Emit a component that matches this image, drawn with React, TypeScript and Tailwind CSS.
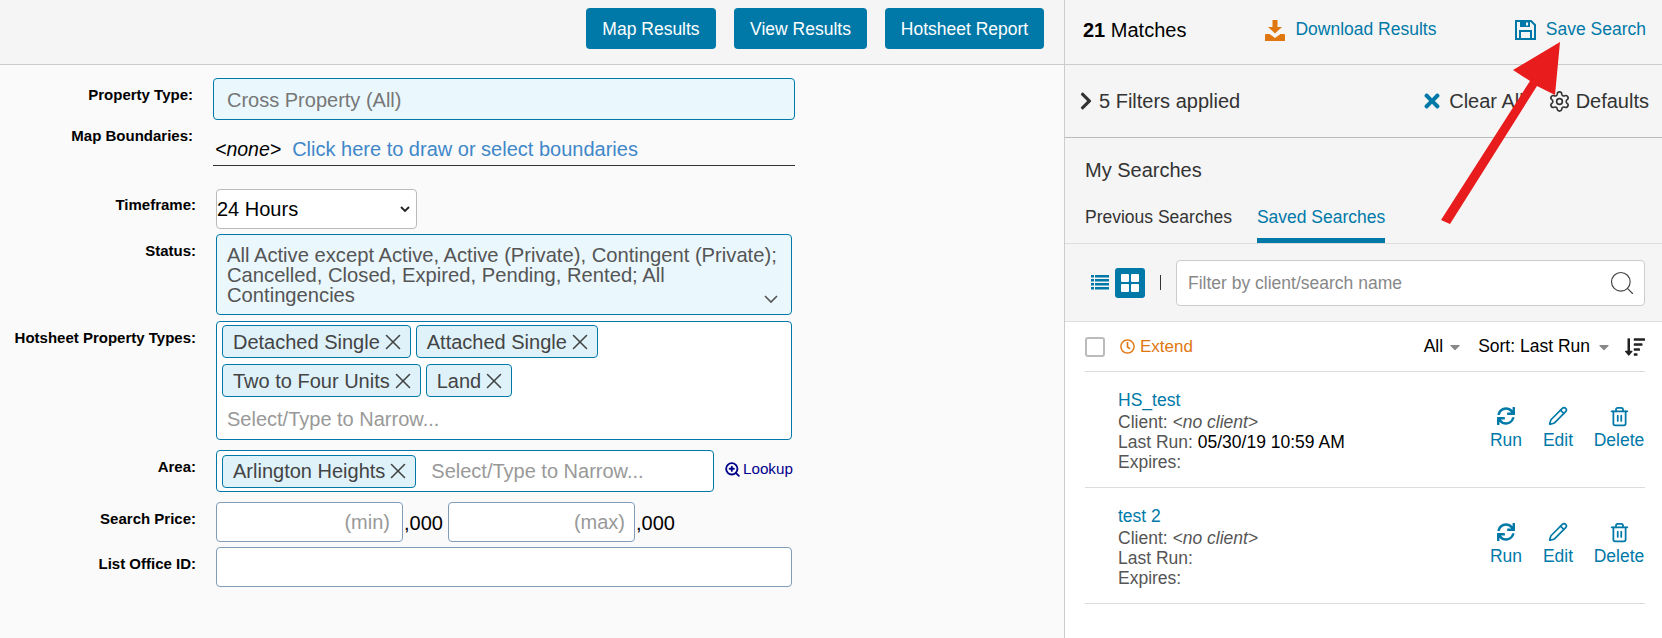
import { Pencil, Search, Settings, Trash2, ZoomIn, X } from "lucide-react";
import {
  FaCaretDown,
  FaChevronRight,
  FaRegClock,
  FaSortAmountDown,
  FaSync,
  FaTimes,
} from "react-icons/fa";

const labelClass =
  "w-[196px] shrink-0 text-right text-[15px] leading-[18px] font-bold text-black";
const boxClass = "border border-[#0079a8] rounded-[4px]";
const plainInput =
  "h-[40px] border border-[#7f9db9] rounded-[4px] bg-white text-[20px] outline-none placeholder:text-[#999]";

function Chip({ text }: { text: string }) {
  return (
    <span className="inline-flex h-[33px] items-center rounded-[4px] border border-[#0079a8] bg-[#dff2fa] pl-[10px] text-[20px] text-[#444]">
      {text}
      <X size={26} strokeWidth={1.5} className="mr-[4px]" />
    </span>
  );
}

function Action({ icon, label, w }: { icon: React.ReactNode; label: string; w: string }) {
  return (
    <div className={`flex flex-col items-center ${w}`}>
      <div className="flex h-[23px] items-center">{icon}</div>
      <span className="text-[17.5px] leading-[24px]">{label}</span>
    </div>
  );
}

function SearchRow({ name, lastRun }: { name: string; lastRun?: string }) {
  return (
    <div className="flex h-[116px] items-center border-b border-[#ddd] pl-[33px]">
      <div className="mt-[2px] flex-1 text-[17.5px] leading-[20px] text-[#555]">
        <div className="mb-[2px] text-[#0079a8]">{name}</div>
        <div>
          Client: <i>&lt;no client&gt;</i>
        </div>
        <div>
          Last Run: <span className="text-black">{lastRun}</span>
        </div>
        <div>Expires:</div>
      </div>
      <div className="mr-[1px] flex gap-[21px] pb-[3px] text-[#0079a8]">
        <Action w="w-[32px]" label="Run" icon={<FaSync size={18} />} />
        <Action w="w-[30px]" label="Edit" icon={<Pencil size={20} strokeWidth={2} />} />
        <Action w="w-[50px]" label="Delete" icon={<Trash2 size={21} strokeWidth={2} />} />
      </div>
    </div>
  );
}

function DownloadIcon() {
  return (
    <svg width="20" height="21" viewBox="0 0 20 21" fill="#e0760f">
      <path d="M7.500 0h5v7h4.500L10 13.500 3 7h4.500z" />
      <path d="M1 14h3.500l5.500 4 5.500-4H19a1 1 0 0 1 1 1v6H0v-6a1 1 0 0 1 1-1z" />
    </svg>
  );
}

function SaveIcon() {
  return (
    <svg width="21" height="20" viewBox="0 0 21 20" fill="none" stroke="#0079a8" strokeWidth="2">
      <path d="M1 1h15l4 4v14H1z" />
      <path d="M5 11h11v8H5z" />
      <path d="M5 1h10v6H5z" fill="#0079a8" stroke="none" />
      <path d="M11 2.500h2v3h-2z" fill="#f5f5f5" stroke="none" />
    </svg>
  );
}

function ListIcon() {
  return (
    <svg width="18" height="15" viewBox="0 0 18 15" fill="#0079a8">
      <path d="M0 0h3v2.500H0zM4 0h14v2.500H4zM0 4h3v2.500H0zM4 4h14v2.500H4zM0 8h3v2.500H0zM4 8h14v2.500H4zM0 12h3v2.500H0zM4 12h14v2.500H4z" />
    </svg>
  );
}

function GridIcon() {
  return (
    <svg width="18" height="18" viewBox="0 0 18 18" fill="#fff">
      <rect width="8" height="8" rx="1" />
      <rect x="10" width="8" height="8" rx="1" />
      <rect y="10" width="8" height="8" rx="1" />
      <rect x="10" y="10" width="8" height="8" rx="1" />
    </svg>
  );
}

export default function App() {
  return (
    <div className="relative flex h-[638px] w-[1662px] overflow-hidden bg-white font-['Liberation_Sans',Arial,sans-serif] text-black">
      {/* left search form */}
      <div className="flex w-[1065px] flex-col border-r border-[#ccc] bg-[#fafafa]">
        <div className="flex h-[65px] items-start justify-end gap-[18px] border-b border-[#ccc] bg-[#f5f5f5] pr-[20px] pt-[8px]">
          <button className="h-[41px] w-[130px] rounded-[4px] bg-[#0079a8] pt-[1px] text-[17.5px] text-white">
            Map Results
          </button>
          <button className="h-[41px] w-[133px] rounded-[4px] bg-[#0079a8] pt-[1px] text-[17.5px] text-white">
            View Results
          </button>
          <button className="h-[41px] w-[159px] rounded-[4px] bg-[#0079a8] pt-[1px] text-[17.5px] text-white">
            Hotsheet Report
          </button>
        </div>

        <div className="pt-[13px]">
          <div className="flex gap-[20px]">
            <div className={`${labelClass} mt-[8px] !w-[193px]`}>Property Type:</div>
            <div className={`${boxClass} flex h-[42px] w-[582px] items-center bg-[#eaf7fd] px-[13px] pt-[2px] text-[20px] text-[#777]`}>
              Cross Property (All)
            </div>
          </div>

          <div className="mt-[7px] flex gap-[20px]">
            <div className={`${labelClass} !w-[193px]`}>Map Boundaries:</div>
            <div className="flex h-[39px] w-[582px] items-end border-b border-[#333] pb-[4px] text-[20px] leading-[24px]">
              <i className="ml-[2px] text-[19.5px]">&lt;none&gt;</i>
              <span className="ml-[11px] text-[#3f87c9]">Click here to draw or select boundaries</span>
            </div>
          </div>

          <div className="mt-[23px] flex gap-[20px]">
            <div className={`${labelClass} mt-[7px]`}>Timeframe:</div>
            <div className="relative h-[40px] w-[201px]">
              <select className="h-full w-full appearance-none rounded-[4px] border border-[#bbb] bg-white text-[20px]">
                <option>24 Hours</option>
              </select>
              <svg className="pointer-events-none absolute right-[7px] top-[17px]" width="10" height="7" viewBox="0 0 10 7" fill="none" stroke="#222" strokeWidth="1.8">
                <path d="M1 1l4 4 4-4" />
              </svg>
            </div>
          </div>

          <div className="mt-[5px] flex gap-[20px]">
            <div className={`${labelClass} mt-[8px]`}>Status:</div>
            <div className={`${boxClass} relative h-[81px] w-[576px] bg-[#eaf7fd] px-[10px] pt-[10px] text-[20.2px] leading-[20px] text-[#555]`}>
              All Active except Active, Active (Private), Contingent (Private); Cancelled, Closed, Expired, Pending, Rented; All Contingencies
              <svg className="absolute bottom-[10px] right-[13px]" width="14" height="9" viewBox="0 0 14 9" fill="none" stroke="#555" strokeWidth="1.6">
                <path d="M1 1l6 6 6-6" />
              </svg>
            </div>
          </div>

          <div className="mt-[6px] flex gap-[20px]">
            <div className={`${labelClass} mt-[8px]`}>Hotsheet Property Types:</div>
            <div className={`${boxClass} h-[119px] w-[576px] bg-white px-[5px] pt-[3px]`}>
              <div className="flex gap-[5px]">
                <Chip text="Detached Single" />
                <Chip text="Attached Single" />
              </div>
              <div className="mt-[6px] flex gap-[5px]">
                <Chip text="Two to Four Units" />
                <Chip text="Land" />
              </div>
              <input
                className="mt-[10px] w-full px-[5px] text-[20px] leading-[24px] outline-none placeholder:text-[#999]"
                placeholder="Select/Type to Narrow..."
              />
            </div>
          </div>

          <div className="mt-[10px] flex gap-[20px]">
            <div className={`${labelClass} mt-[8px]`}>Area:</div>
            <div className={`${boxClass} flex h-[42px] w-[498px] items-center bg-white pl-[5px]`}>
              <Chip text="Arlington Heights" />
              <input
                className="ml-[15px] flex-1 text-[20px] outline-none placeholder:text-[#999]"
                placeholder="Select/Type to Narrow..."
              />
            </div>
            <div className="-ml-[10px] flex items-center pb-[3px] text-[15.2px] text-[#00008b]">
              <ZoomIn size={17} strokeWidth={2.6} className="mr-[2px]" />
              Lookup
            </div>
          </div>

          <div className="mt-[10px] flex gap-[20px]">
            <div className={`${labelClass} mt-[8px]`}>Search Price:</div>
            <div className="flex items-center text-[20px]">
              <input className={`${plainInput} w-[187px] pr-[12px] text-right`} placeholder="(min)" />
              <span className="ml-[1px] w-[44px] pt-[2px]">,000</span>
              <input className={`${plainInput} w-[187px] pr-[9px] text-right`} placeholder="(max)" />
              <span className="ml-[1px] pt-[2px]">,000</span>
            </div>
          </div>

          <div className="mt-[5px] flex gap-[20px]">
            <div className={`${labelClass} mt-[8px]`}>List Office ID:</div>
            <input className={`${plainInput} w-[576px]`} />
          </div>
        </div>
      </div>

      {/* right results panel */}
      <div className="flex flex-1 flex-col">
        <div className="flex h-[65px] items-center border-b border-[#ccc] bg-[#f5f5f5] pb-[4px] pl-[18px] pr-[16px]">
          <span className="mb-[1px] text-[20px]">
            <b>21</b> Matches
          </span>
          <span className="ml-[79px] flex items-center text-[17.5px] text-[#0079a8]">
            <DownloadIcon />
            <span className="mb-[1px] ml-[10px]">Download Results</span>
          </span>
          <span className="ml-auto flex items-center text-[17.5px] text-[#0079a8]">
            <SaveIcon />
            <span className="mb-[1px] ml-[10px]">Save Search</span>
          </span>
        </div>

        <div className="flex h-[73px] items-center border-b border-[#bbb] bg-[#f5f5f5] pl-[11px] pr-[7px] text-[20px] text-[#333]">
          <FaChevronRight size={20} />
          <span className="ml-[3px]">5 Filters applied</span>
          <FaTimes size={22} className="ml-[181px] text-[#0079a8]" />
          <span className="ml-[6px]">Clear All</span>
          <Settings size={23} strokeWidth={1.7} className="ml-auto mr-[-1px]" />
          <span className="ml-[6px] mr-[6px]">Defaults</span>
        </div>

        <div className="flex h-[106px] flex-col justify-end border-b border-[#ddd] bg-[#f5f5f5] pl-[20px]">
          <div className="text-[20px] text-[#333]">My Searches</div>
          <div className="mt-[18px] flex gap-[25px] text-[17.5px]">
            <span className="pt-[1px] text-[#333]">Previous Searches</span>
            <span className="border-b-[5px] border-[#0079a8] pb-[8px] pt-[1px] text-[#0079a8]">Saved Searches</span>
          </div>
        </div>

        <div className="flex h-[78px] items-center border-b border-[#ddd] bg-[#f5f5f5] pl-[26px] pr-[17px]">
          <ListIcon />
          <span className="ml-[6px] flex h-[30px] w-[30px] items-center justify-center rounded-[3px] bg-[#0079a8]">
            <GridIcon />
          </span>
          <span className="ml-[15px] h-[15px] w-px bg-[#333]" />
          <div className="relative ml-[15px] flex-1">
            <input
              className="h-[46px] w-full rounded-[4px] border border-[#ccc] bg-white px-[11px] pt-[1px] text-[17.5px] outline-none placeholder:text-[#888]"
              placeholder="Filter by client/search name"
            />
            <Search size={28} strokeWidth={1} className="absolute right-[9px] top-[9px] text-[#444]" />
          </div>
        </div>

        <div className="pl-[20px] pr-[17px]">
          <div className="flex h-[50px] items-center border-b border-[#ddd]">
            <span className="h-[20px] w-[20px] rounded-[3px] border-2 border-[#bbb] bg-white" />
            <FaRegClock size={15} className="ml-[15px] text-[#e0760f]" />
            <span className="ml-[5px] text-[17px] text-[#e0760f]">Extend</span>
            <span className="ml-auto text-[17.5px]">All</span>
            <FaCaretDown size={16} className="ml-[4px] text-[#888]" />
            <span className="ml-[15px] text-[17.5px]">Sort: Last Run</span>
            <FaCaretDown size={16} className="ml-[6px] text-[#888]" />
            <FaSortAmountDown size={20} className="ml-[13px] text-[#222]" />
          </div>
          <SearchRow name="HS_test" lastRun="05/30/19 10:59 AM" />
          <SearchRow name="test 2" />
        </div>
      </div>

      {/* annotation arrow */}
      <svg className="pointer-events-none absolute left-0 top-0" width="1662" height="638">
        <polygon
          fill="#e81c1c"
          points="1560,42 1513,70 1530,81 1441,220 1450,224 1537,86 1555,95"
        />
      </svg>
    </div>
  );
}
